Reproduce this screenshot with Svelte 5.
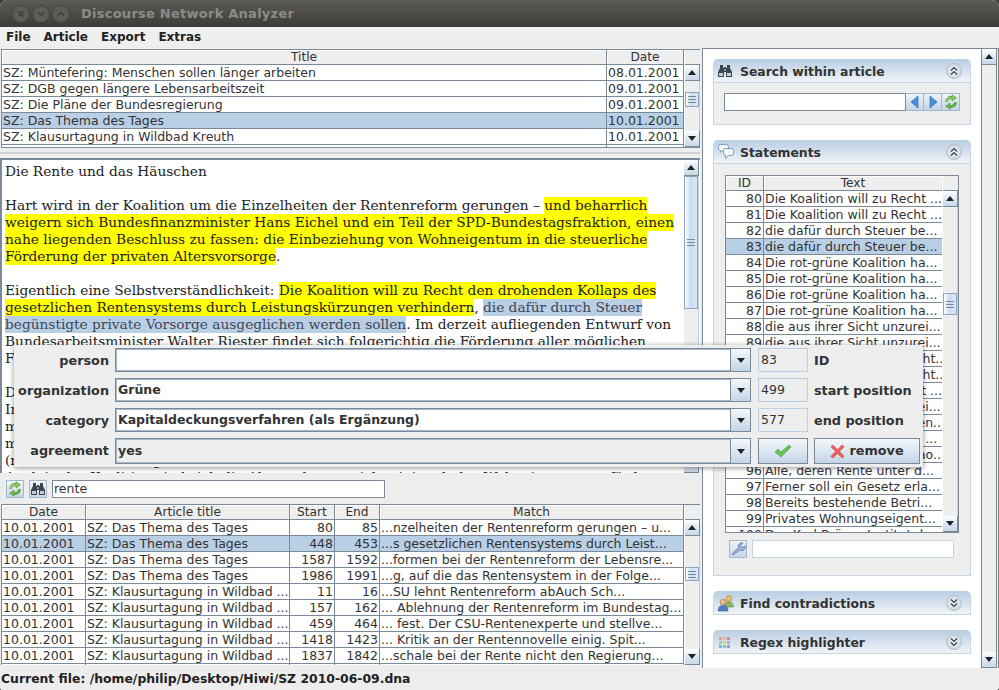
<script>
  const t1 = [
    ['SZ: Müntefering: Menschen sollen länger arbeiten', '08.01.2001'],
    ['SZ: DGB gegen längere Lebensarbeitszeit', '09.01.2001'],
    ['SZ: Die Pläne der Bundesregierung', '09.01.2001'],
    ['SZ: Das Thema des Tages', '10.01.2001'],
    ['SZ: Klausurtagung in Wildbad Kreuth', '10.01.2001'],
    ['', '']
  ];
  const kl = 'SZ: Klausurtagung in Wildbad ...';
  const th = 'SZ: Das Thema des Tages';
  const t2 = [
    ['10.01.2001', th, '80', '85', '...nzelheiten der Rentenreform gerungen – u...'],
    ['10.01.2001', th, '448', '453', '...s gesetzlichen Rentensystems durch Leist...'],
    ['10.01.2001', th, '1587', '1592', '...formen bei der Rentenreform der Lebensre...'],
    ['10.01.2001', th, '1986', '1991', '...g, auf die das Rentensystem in der Folge...'],
    ['10.01.2001', kl, '11', '16', '...SU lehnt Rentenreform abAuch Sch...'],
    ['10.01.2001', kl, '157', '162', '... Ablehnung der Rentenreform im Bundestag...'],
    ['10.01.2001', kl, '459', '464', '... fest. Der CSU-Rentenexperte und stellve...'],
    ['10.01.2001', kl, '1418', '1423', '... Kritik an der Rentennovelle einig. Spit...'],
    ['10.01.2001', kl, '1837', '1842', '...schale bei der Rente nicht den Regierung...'],
    ['10.01.2001', kl, '1900', '1905', '...Rente auf dem Prüfstand in der Koalit...']
  ];
  const ko = 'Die Koalition will zu Recht ...';
  const st = 'die dafür durch Steuer be...';
  const rg = 'Die rot-grüne Koalition ha...';
  const au = 'die aus ihrer Sicht unzurei...';
  const t3 = [
    ['80', ko], ['81', ko], ['82', st], ['83', st], ['84', rg], ['85', rg], ['86', rg], ['87', rg],
    ['88', au], ['89', au],
    ['90', 'Die Koalition will nun Recht...'], ['91', 'Die Koalition will nun Recht...'],
    ['92', ko], ['93', au],
    ['94', 'die aus ihrer Sicht unzuren...'], ['95', 'Die rot-grüne Koalition hi ...'],
    ['95', 'Die rot-grüne Koalition hao...'],
    ['96', 'Alle, deren Rente unter d...'], ['97', 'Ferner soll ein Gesetz erla...'],
    ['98', 'Bereits bestehende Betri...'], ['99', 'Privates Wohnungseigent...'],
    ['100', 'Das Karl Bräuer Institut d...']
  ];
</script>

{#snippet sb(thumbTop, thumbH, headed)}
  <div class="sb">
    {#if headed}<div class="sbhead"></div>{/if}
    <div class="sbbtn"><span class="up"></span></div>
    <div class="track">
      <div class="thumb" style="margin-top:{thumbTop}px;height:{thumbH}px"><i></i><i></i><i></i></div>
    </div>
    <div class="sbbtn"><span class="down"></span></div>
  </div>
{/snippet}

{#snippet table(cols, heads, rows, sel, right, thumbTop, thumbH)}
  <div class="tcol">
    <div class="trow thead" style="grid-template-columns:{cols}">
      {#each heads as h}<div class="th">{h}</div>{/each}
    </div>
    {#each rows as r, i}
      <div class="trow" class:sel={i === sel} style="grid-template-columns:{cols}">
        {#each r as c, j}<div class="td" class:ra={right.includes(j)}>{c}</div>{/each}
      </div>
    {/each}
  </div>
  {@render sb(thumbTop, thumbH, true)}
{/snippet}

{#snippet refresh()}
  <svg viewBox="0 0 16 16" width="16" height="16">
    <g fill="none">
      <path d="M3.500 8A4.500 4.500 0 0 1 9.500 3.800" stroke="#4a8f2c" stroke-width="2.800"/>
      <path d="M12.500 8A4.500 4.500 0 0 1 6.500 12.200" stroke="#4a8f2c" stroke-width="2.800"/>
      <path d="M3.500 8A4.500 4.500 0 0 1 9.500 3.800" stroke="#a6dc78" stroke-width="1.400"/>
      <path d="M12.500 8A4.500 4.500 0 0 1 6.500 12.200" stroke="#6fc04a" stroke-width="1.400"/>
    </g>
    <path d="M9 .8v6.200l4.500-3.200z" fill="#8ed262" stroke="#4a8f2c" stroke-width=".6"/>
    <path d="M7 9v6.200l-4.500-3z" fill="#6fc04a" stroke="#4a8f2c" stroke-width=".6"/>
  </svg>
{/snippet}

{#snippet binoc()}
  <svg viewBox="0 0 16 16" width="16" height="16"><path d="M3 2h3v3h1v-1h2v1h1V2h3v3l2 4v5h-6V9H7v5H1V9l2-4z" fill="#3d4650"/><path d="M2 10h4v3H2zM10 10h4v3h-4z" fill="#c8ccd0"/><path d="M7 6h2v2H7z" fill="#8b939b"/></svg>
{/snippet}

{#snippet chev(up)}
  <div class="chev">
    <svg viewBox="0 0 12 12" width="12" height="12" fill="none" stroke="#39424b" stroke-width="1.200">
      {#if up}<path d="M3 5.500 6 2.500l3 3M3 9.500l3-3 3 3"/>{:else}<path d="M3 2.500l3 3 3-3M3 6.500l3 3 3-3"/>{/if}
    </svg>
  </div>
{/snippet}

<div class="app">
  <header class="title">
    <div class="wbtns">
      <span class="wb"><svg viewBox="0 0 10 10" width="10" height="10"><path d="M2.500 2.500l5 5M7.500 2.500l-5 5" stroke="#3c3b37" stroke-width="1.200"/></svg></span>
      <span class="wb"><svg viewBox="0 0 10 10" width="10" height="10"><path d="M2 3.500 5 6.500 8 3.500" fill="none" stroke="#3c3b37" stroke-width="1.200"/></svg></span>
      <span class="wb"><svg viewBox="0 0 10 10" width="10" height="10"><path d="M2 6.500 5 3.500 8 6.500" fill="none" stroke="#3c3b37" stroke-width="1.200"/></svg></span>
    </div>
    <span class="ttext">Discourse Network Analyzer</span>
  </header>
  <nav class="menu"><span>File</span><span>Article</span><span>Export</span><span>Extras</span></nav>

  <main class="main">
    <section class="left">
      <div class="tbl t1">
        {@render table('605px 77px', ['Title', 'Date'], t1, 3, [], 11, 15)}
      </div>
      <div class="dots"></div>
      <div class="editor">
        <div class="doc">
          <div class="ln">Die Rente und das Häuschen</div>
          <div class="ln"></div>
          <div class="ln">Hart wird in der Koalition um die Einzelheiten der Rentenreform gerungen – <mark>und beharrlich</mark></div>
          <div class="ln"><mark>weigern sich Bundesfinanzminister Hans Eichel und ein Teil der SPD-Bundestagsfraktion, einen</mark></div>
          <div class="ln"><mark>nahe liegenden Beschluss zu fassen: die Einbeziehung von Wohneigentum in die steuerliche</mark></div>
          <div class="ln"><mark>Förderung der privaten Altersvorsorge</mark>.</div>
          <div class="ln"></div>
          <div class="ln">Eigentlich eine Selbstverständlichkeit: <mark>Die Koalition will zu Recht den drohenden Kollaps des</mark></div>
          <div class="ln"><mark>gesetzlichen Rentensystems durch Leistungskürzungen verhindern</mark>, <mark class="blue">die dafür durch Steuer</mark></div>
          <div class="ln"><mark class="blue">begünstigte private Vorsorge ausgeglichen werden sollen</mark>. Im derzeit aufliegenden Entwurf von</div>
          <div class="ln">Bundesarbeitsminister Walter Riester findet sich folgerichtig die Förderung aller möglichen</div>
          <div class="ln">Formen der privaten Altersvorsorge.</div>
          <div class="ln"></div>
          <div class="ln">Doch die Sache hat einen Haken.</div>
          <div class="ln">In der Union wird das begrüßt.</div>
          <div class="ln">man will mehr für die Vorsorge tun.</div>
          <div class="ln">mit dem Häuschen im Grünen.</div>
          <div class="ln">(mehr Geld für die Eigenheime).</div>
          <div class="ln">Auch in der Koalition sind sich die Abgeordneten nicht einig, ob das Wohneigentum gefördert</div>
        </div>
        {@render sb(0, 133, false)}
      </div>
      <div class="searchrow">
        <button class="mbtn">{@render refresh()}</button>
        <button class="mbtn">{@render binoc()}</button>
        <div class="field">rente</div>
      </div>
      <div class="tbl t2">
        {@render table('84px 204px 45px 45px 304px', ['Date', 'Article title', 'Start', 'End', 'Match'], t2, 1, [2, 3], 31, 14)}
      </div>
    </section>

    <section class="right">
      <div class="rpane">
        <div class="panel">
          <div class="phead">
            <span class="picon">{@render binoc()}</span><span class="ptitle">Search within article</span>{@render chev(true)}
          </div>
          <div class="pbody psearch">
            <div class="field wide"></div>
            <button class="mini"><svg viewBox="0 0 12 16" width="12" height="16"><path d="M9 2v12L2 8z" fill="#4a8ede" stroke="#2d62a8" stroke-width=".6"/></svg></button>
            <button class="mini"><svg viewBox="0 0 12 16" width="12" height="16"><path d="M3 2v12l7-6z" fill="#4a8ede" stroke="#2d62a8" stroke-width=".6"/></svg></button>
            <button class="mini">{@render refresh()}</button>
          </div>
        </div>
        <div class="panel">
          <div class="phead">
            <span class="picon"><svg viewBox="0 0 18 18" width="18" height="18" fill="#f4f8fc" stroke="#7f9fc4"><path d="M1.500 3.500q0-2 2-2h6q2 0 2 2v2q0 2-2 2h-4l-2 2v-2q-2 0-2-2z"/><path d="M6.500 7.500q0-2 2-2h6q2 0 2 2v3q0 2-2 2h-3l-3 3v-3q-2 0-2-2z"/></svg></span><span class="ptitle">Statements</span>{@render chev(true)}
          </div>
          <div class="pbody pstat">
            <div class="tbl t3">
              {@render table('38px 179px', ['ID', 'Text'], t3, 3, [0], 86, 22)}
            </div>
            <div class="filter">
              <button class="mini wrench"><svg viewBox="0 0 16 16" width="16" height="16"><path d="M3 14l-1-1 6.500-6.500a3.500 3.500 0 0 1 4.500-4.500l-2.500 2.500 1 2 2-.5 1.500-1.500a3.500 3.500 0 0 1-5 4.500z" fill="#9db4d0" stroke="#5b7ea8" stroke-width=".8"/></svg></button>
              <div class="field light"></div>
            </div>
          </div>
        </div>
        <div class="panel closed">
          <div class="phead">
            <span class="picon"><svg viewBox="0 0 18 18" width="18" height="18"><circle cx="12" cy="4.500" r="3" fill="#e8c170" stroke="#a88638" stroke-width=".6"/><path d="M7.500 13q.5-5 4.500-5t4.500 5z" fill="#8cb85c" stroke="#5e8a36" stroke-width=".6"/><circle cx="6" cy="8" r="3" fill="#e8b890" stroke="#a87848" stroke-width=".6"/><path d="M1 17q0-5.500 5-5.500t5 5.500z" fill="#4e82c8" stroke="#335f9a" stroke-width=".6"/></svg></span><span class="ptitle">Find contradictions</span>{@render chev(false)}
          </div>
        </div>
        <div class="panel closed">
          <div class="phead">
            <span class="picon">
              <svg viewBox="0 0 14 14" width="14" height="14"><path d="M2 2h3v3H2z" fill="#e59a9a"/><path d="M6 2h3v3H6z" fill="#e8bd80"/><path d="M10 2h3v3h-3z" fill="#d88"/><path d="M2 6h3v3H2z" fill="#a6cf8e"/><path d="M6 6h3v3H6z" fill="#e5cf72"/><path d="M10 6h3v3h-3z" fill="#c99ad8"/><path d="M2 10h3v3H2z" fill="#7fb0de"/><path d="M6 10h3v3H6z" fill="#88c8b8"/><path d="M10 10h3v3h-3z" fill="#8aa0d8"/></svg>
            </span><span class="ptitle">Regex highlighter</span>{@render chev(false)}
          </div>
        </div>
      </div>
      <div class="rsb">{@render sb(0, 0, false)}</div>
    </section>
  </main>

  <footer class="status">Current file: /home/philip/Desktop/Hiwi/SZ 2010-06-09.dna</footer>

  <div class="modal">
    <div class="mlabels">
      <label for="p1">person</label><label for="p2">organization</label><label for="p3">category</label><label for="p4">agreement</label>
    </div>
    <div class="mcombos">
      <div class="combo"><div class="cval" id="p1"></div><div class="carrow"><span class="down"></span></div></div>
      <div class="combo"><div class="cval" id="p2">Grüne</div><div class="carrow"><span class="down"></span></div></div>
      <div class="combo"><div class="cval" id="p3">Kapitaldeckungsverfahren (als Ergänzung)</div><div class="carrow"><span class="down"></span></div></div>
      <div class="combo off"><div class="cval" id="p4">yes</div><div class="carrow"><span class="down"></span></div></div>
    </div>
    <div class="mside">
      <div class="num">83</div><div class="nlabel">ID</div>
      <div class="num">499</div><div class="nlabel">start position</div>
      <div class="num">577</div><div class="nlabel">end position</div>
      <button class="bigbtn ok"><svg viewBox="0 0 18 16" width="18" height="16"><path d="M1 9l3-3 3 3 8-7 2 2L7 14z" fill="#6cc05a" stroke="#4a9a3e" stroke-width=".6"/></svg></button>
      <button class="bigbtn rm"><svg viewBox="0 0 16 16" width="15" height="15"><path d="M1 3l2-2 5 5 5-5 2 2-5 5 5 5-2 2-5-5-5 5-2-2 5-5z" fill="#ee5f5f" stroke="#c23c3c" stroke-width=".6"/></svg>remove</button>
    </div>
  </div>
</div>

<style>
  :global(body) { margin: 0; background: #3c3b37; }
  .app {
    position: relative; width: 999px; height: 690px; overflow: hidden;
    display: flex; flex-direction: column; background: #ededed; color: #333;
    font: 12.500px/16px "DejaVu Sans", sans-serif; border-radius: 7px 7px 3px 3px;
  }
  .title {
    height: 27px; flex: none; display: flex; align-items: center; box-sizing: border-box;
    background: linear-gradient(#5c5b56, #3c3b37); padding-left: 12px;
  }
  .wbtns { display: flex; gap: 2px; width: 69px; }
  .wb {
    width: 16px; height: 16px; border-radius: 50%; background: #5d5c57; border: 1px solid #45443f;
    display: flex; align-items: center; justify-content: center;
  }
  .wb svg { display: block; }
  .ttext { color: #8c8c86; font-weight: 700; font-size: 13px; letter-spacing: .25px; }
  .menu {
    height: 19px; flex: none; display: flex; gap: 13px; align-items: center; padding-left: 6px;
    font-weight: 700; font-size: 12px; background: #efefef; color: #222;
  }
  .main { height: 622px; flex: none; display: flex; }
  .left { width: 700px; flex: none; display: flex; flex-direction: column; padding-top: 3px; box-sizing: border-box; }
  .right {
    width: 297px; margin: 2px 0 0 2px; height: 621px; box-sizing: border-box; display: flex;
    border: 1px solid #7a8a99; border-width: 1px 0 1px 1px; background: #fff;
  }
  .status { height: 22px; flex: none; font-weight: 700; font-size: 12.400px; padding-left: 1px; line-height: 21px; background: #ededed; color: #222; box-sizing: border-box; }

  .tbl { display: flex; overflow: hidden; box-sizing: border-box; border: 1px solid #7a8a99; border-right: 0; background: #fff; }
  .t1 { height: 99px; margin-left: 1px; width: 699px; }
  .t2 { height: 161px; margin-left: 1px; width: 699px; border-bottom: 0; }
  .t3 { height: 358px; width: 234px; border-right: 1px solid #7a8a99; }
  .tcol { overflow: hidden; }
  .t1 .tcol, .t2 .tcol { width: 682px; }
  .t3 .tcol { width: 217px; }
  .trow { display: grid; height: 16px; box-sizing: border-box; border-bottom: 1px solid #7a8a99; background: #fff; }
  .trow.sel { background: #b8cfe5; }
  .thead { background: #eee; height: 15px; }
  .th, .td { border-right: 1px solid #7a8a99; white-space: nowrap; overflow: hidden; line-height: 15px; }
  .th { text-align: center; font-size: 12.200px; line-height: 14px; box-shadow: inset 1px 1px 0 #fff; }
  .td { padding-left: 1px; }
  .td.ra { text-align: right; padding: 0 1px 0 0; }

  .sb { width: 16px; flex: none; display: flex; flex-direction: column; background: #eee; border-left: 1px solid #fff; box-sizing: border-box; }
  .sbhead { height: 15px; flex: none; border-bottom: 1px solid #7a8a99; box-sizing: border-box; }
  .sbbtn {
    height: 16px; flex: none; display: flex; align-items: center; justify-content: center; box-sizing: border-box;
    background: linear-gradient(#fff, #dde8f3 50%, #c8d8e8); border: 1px solid #7a8a99; border-width: 0 1px 1px 0;
  }
  .up { border: 4px solid transparent; border-top: 0; border-bottom: 5px solid #222; width: 0; height: 0; }
  .down { border: 4px solid transparent; border-bottom: 0; border-top: 5px solid #222; width: 0; height: 0; }
  .track { flex: 1; min-height: 0; overflow: hidden; border-right: 1px solid #c5cfd9; }
  .thumb {
    box-sizing: border-box; display: flex; flex-direction: column; gap: 2px; align-items: center; justify-content: center;
    background: linear-gradient(90deg, #fff, #c8ddf2 45%, #dde8f3); border: 1px solid #8fa5bb;
  }
  .thumb i { display: block; width: 8px; height: 1px; background: #7a8a99; }

  .rsb { display: flex; flex: none; background: #eee; padding-right: 2px; box-shadow: inset -1px 0 0 #8a8270; }
  .rsb .sb { border-left: 1px solid #7a8a99; }
  .rsb .thumb { display: none; }
  .rsb .track { border-right: 1px solid #7a8a99; }
  .rsb .sbbtn { border-right-color: #7a8a99; }

  .dots {
    height: 10px; flex: none; background-color: #eee; box-sizing: border-box;
    background-image: radial-gradient(#a9b2bb .6px, transparent .8px); background-size: 2px 2px; background-position: 0 4px;
    background-repeat: repeat-x;
  }
  .editor {
    height: 315px; flex: none; display: flex; box-sizing: border-box; border: 2px solid #7a8a99; border-width: 2px 0 0 2px;
    background: #fff; overflow: hidden; padding-right: 1px;
  }
  .doc { flex: 1; padding: 3px 0 0 3px; font: 13.720px/17px "DejaVu Serif", serif; color: #222; overflow: hidden; min-width: 0; }
  .ln { height: 17px; white-space: nowrap; }
  mark { background: #ffff00; color: inherit; display: inline-block; height: 17px; }
  mark.blue { background: #b8cfe5; color: #445; }

  .searchrow { height: 31px; flex: none; display: flex; align-items: center; gap: 5px; padding-left: 6px; }
  button { font: inherit; margin: 0; padding: 0; }
  .mbtn {
    width: 18px; height: 18px; display: flex; align-items: center; justify-content: center;
    border: 1px solid #a3b8cc; background: linear-gradient(#f4f8fb, #c8d8e8);
  }
  .field {
    box-sizing: border-box; width: 333px; height: 18px; background: #fff; border: 1px solid #7a8a99;
    padding-left: 1px; line-height: 16px; color: #333;
  }

  .rpane { flex: 1; padding: 10px 10px 0 10px; display: flex; flex-direction: column; gap: 15px; min-width: 0; }
  .panel { width: 258px; }
  .phead {
    height: 24px; display: flex; align-items: center; box-sizing: border-box; padding: 2px 0 0 3px;
    background: linear-gradient(#b8cde3, #f1f4f7); border: 1px solid #c7d5e4; border-width: 0 1px 1px;
    border-radius: 5px 5px 0 0; font-weight: 700; font-size: 12.400px; color: #333;
  }
  .picon { width: 23px; flex: none; display: flex; align-items: center; margin-top: -2px; }
  .ptitle { flex: 1; }
  .chev {
    width: 16px; height: 16px; margin: -2px 8px 0 0; border-radius: 50%; background: radial-gradient(#eef2f6, #c3ced9); border: 1px solid #b4c0cc;
    display: flex; align-items: center; justify-content: center; box-sizing: border-box;
  }
  .chev svg { display: block; }
  .pbody { background: #eee; border: 1px solid #c7d5e4; border-top: 0; box-sizing: border-box; }
  .psearch { height: 42px; display: flex; align-items: flex-start; padding: 10px 0 0 10px; }
  .field.wide { width: 182px; }
  .mini {
    width: 18px; height: 18px; flex: none; display: flex; align-items: center; justify-content: center;
    border: 1px solid #a3b8cc; border-left-width: 0; background: linear-gradient(#eef3f8, #c3d5e7);
  }
  .mini svg { display: block; }
  .pstat { height: 412px; padding: 11px 0 0 11px; }
  .filter { display: flex; gap: 5px; padding: 7px 0 0 4px; }
  .mini.wrench { border-left-width: 1px; }
  .field.light { width: 202px; border-color: #c4d4e4; }

  .modal {
    position: absolute; left: 14px; top: 345px; width: 909px; height: 122px; background: #eee; box-sizing: border-box;
    box-shadow: 0 1px 5px rgba(0, 0, 0, .45); display: flex; padding-top: 3px; font-weight: 700; font-size: 12.800px;
  }
  .mlabels { width: 95px; display: flex; flex-direction: column; }
  .mlabels label { height: 30px; line-height: 26px; text-align: right; white-space: nowrap; }
  .mlabels label:last-child { line-height: 27px; }
  .mcombos { width: 636px; margin-left: 6px; display: flex; flex-direction: column; gap: 6px; font-size: 12.500px; }
  .combo { height: 24px; display: flex; box-sizing: border-box; border: 1px solid #7a8a99; background: #fff; box-shadow: inset 0 0 0 1px #a3b8cc; }
  .combo:last-child { height: 26px; }
  .combo.off { background: #eee; }
  .cval { flex: 1; padding-left: 2px; line-height: 22px; min-width: 0; }
  .combo:last-child .cval { line-height: 24px; }
  .carrow { width: 19px; border-left: 1px solid #7a8a99; background: linear-gradient(#f4f8fb, #c3d5e7); display: flex; align-items: center; justify-content: center; }
  .carrow .down { border-width: 5px 4.500px 0; }
  .mside { display: grid; grid-template-columns: 50px 106px; column-gap: 6px; row-gap: 6px; grid-auto-rows: 24px; margin-left: 7px; align-content: start; }
  .num { border: 1px solid #b8cfe5; font-weight: 400; font-size: 12.500px; padding-left: 2px; line-height: 22px; box-sizing: border-box; }
  .nlabel { line-height: 26px; white-space: nowrap; }
  .bigbtn {
    height: 26px; display: flex; align-items: center; justify-content: center; gap: 4px; font-weight: 700; color: #333;
    border: 1px solid #7a8a99; background: linear-gradient(#f4f8fb, #c3d5e7);
  }
</style>
